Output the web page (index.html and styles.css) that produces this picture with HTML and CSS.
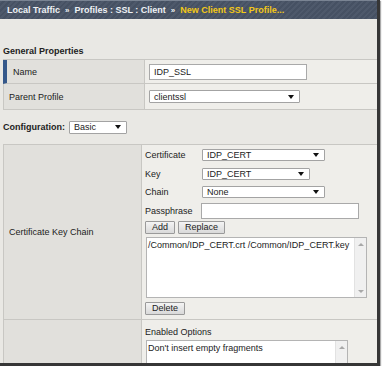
FILE: index.html
```html
<!DOCTYPE html>
<html lang="en">
<head>
    <meta charset="UTF-8">
    <title>New Client SSL Profile</title>
    <link rel="stylesheet" href="styles.css">
</head>
<body>
<div class="frame">
    <!-- breadcrumb bar -->
    <div class="crumbs">
        <span>Local Traffic</span>
        <span class="sep">&raquo;</span>
        <span>Profiles : SSL : Client</span>
        <span class="sep">&raquo;</span>
        <span class="current">New Client SSL Profile...</span>
    </div>

    <div class="section-title">General Properties</div>
    <div class="props props-general">
        <div class="label required">Name</div>
        <div class="value"><input class="text name-input" type="text" value="IDP_SSL"></div>
        <div class="label">Parent Profile</div>
        <div class="value">
            <div class="select parent-select"><span>clientssl</span><span class="caret"></span></div>
        </div>
    </div>

    <div class="config">
        <span class="config-label">Configuration:</span>
        <div class="select basic-select"><span>Basic</span><span class="caret"></span></div>
    </div>

    <div class="props props-config">
        <div class="label">Certificate Key Chain</div>
        <div class="value keychain">
            <div class="chain-form">
                <span>Certificate</span>
                <div class="select cert-select"><span>IDP_CERT</span><span class="caret"></span></div>
                <span>Key</span>
                <div class="select key-select"><span>IDP_CERT</span><span class="caret"></span></div>
                <span>Chain</span>
                <div class="select cert-select"><span>None</span><span class="caret"></span></div>
                <span>Passphrase</span>
                <input class="text pass-input" type="text" value="">
            </div>
            <div class="buttons">
                <button class="btn">Add</button>
                <button class="btn">Replace</button>
            </div>
            <div class="listbox chain-list">
                <div class="list-text">/Common/IDP_CERT.crt /Common/IDP_CERT.key</div>
                <div class="scroll-track"><span class="up"></span><span class="down"></span></div>
            </div>
            <div class="buttons">
                <button class="btn">Delete</button>
            </div>
        </div>
        <div class="label"></div>
        <div class="value options">
            <div class="options-title">Enabled Options</div>
            <div class="listbox options-list">
                <div class="list-text">Don't insert empty fragments</div>
                <div class="scroll-track"><span class="up"></span></div>
            </div>
        </div>
    </div>
</div>
</body>
</html>
```

FILE: styles.css
```css
body {
    margin: 0;
    background-color: #fff;
    font-family: "Liberation Sans", Arial, sans-serif;
    font-size: 9px;
    color: #222;
}

.frame {
    width: 377px;
    height: 363px;
    overflow: hidden;
    background-color: #e9e8e4;
    border-right: 3px solid #363636;
    border-bottom: 3px solid #363636;
    box-shadow: 1px 1px 1px #aaa;
}

/* breadcrumb bar */
.crumbs {
    height: 18px;
    border-top: 1px solid #7a8493;
    padding-left: 7px;
    display: flex;
    align-items: center;
    font-weight: bold;
    color: #eef1f5;
    background-color: #4a5567;
    background-image: repeating-linear-gradient(135deg, #4e596b 0 2px, #465163 2px 4px);
}

.crumbs .sep {
    margin: 0 5px;
    font-size: 8px;
}

.crumbs .current {
    color: #f3c817;
}

.section-title {
    font-weight: bold;
    line-height: 11px;
    padding: 27px 0 2px 3px;
}

/* property tables */
.props {
    display: grid;
    margin-left: 3px;
    border-top: 1px solid #c8c7c3;
}

.props-general {
    grid-template-columns: 142px 1fr;
}

.props-config {
    grid-template-columns: 139px 1fr;
}

.label {
    background-color: #e1e0dc;
    border-left: 1px solid #c8c7c3;
    border-right: 1px solid #c8c7c3;
    border-bottom: 1px solid #c8c7c3;
    padding-left: 5px;
    display: flex;
    align-items: center;
}

.label.required {
    border-left: 4px solid #35588a;
    padding-left: 6px;
}

.value {
    background-color: #efeeea;
    border-bottom: 1px solid #c8c7c3;
    padding-left: 4px;
    display: flex;
    align-items: center;
}

.props-general .label,
.props-general .value {
    height: 23px;
}

.props-general .label:nth-child(3),
.props-general .value:nth-child(4) {
    height: 25px;
}

/* controls */
.text {
    box-sizing: border-box;
    height: 16px;
    margin: 0;
    padding: 0 4px;
    border: 1px solid #a9a9a9;
    background: #fff;
    font: 9px "Liberation Sans", Arial, sans-serif;
    color: #222;
}

.name-input {
    width: 158px;
}

.pass-input {
    width: 158px;
}

.select {
    box-sizing: border-box;
    height: 13px;
    border: 1px solid #a3a3a3;
    border-radius: 1px;
    background: #fff;
    display: flex;
    align-items: center;
    justify-content: space-between;
    padding: 0 5px 0 4px;
}

.caret {
    width: 0;
    height: 0;
    border-left: 3px solid transparent;
    border-right: 3px solid transparent;
    border-top: 4px solid #111;
}

.parent-select {
    width: 151px;
}

.config {
    display: flex;
    align-items: center;
    height: 14px;
    padding-left: 3px;
    margin: 10px 0 10px;
}

.config-label {
    font-weight: bold;
    margin-right: 4px;
}

.basic-select {
    width: 58px;
}

/* certificate key chain */
.keychain {
    display: block;
    padding: 1px 0 4px 3px;
}

.chain-form {
    display: grid;
    grid-template-columns: 56px auto;
    grid-auto-rows: 18.5px;
    align-items: center;
    justify-items: start;
}

.cert-select {
    width: 123px;
    height: 12px;
    margin-left: 1px;
}

.key-select {
    width: 108px;
    height: 12px;
    margin-left: 1px;
}

.buttons {
    display: flex;
    gap: 3px;
    margin-top: 1px;
}

.btn {
    height: 13px;
    margin: 0;
    padding: 0 6px;
    border: 1px solid #9a9a9a;
    border-radius: 1px;
    background: linear-gradient(#f4f4f4, #d9d9d9);
    font: 9px "Liberation Sans", Arial, sans-serif;
    color: #222;
    line-height: 11px;
}

.listbox {
    box-sizing: border-box;
    display: flex;
    border: 1px solid #b4b4b4;
    background: #fff;
}

.list-text {
    flex: 1;
    padding: 2px 1px;
    line-height: 11px;
    white-space: nowrap;
}

.scroll-track {
    width: 11px;
    background: #f0f0f0;
    border-left: 1px solid #e2e2e2;
    display: flex;
    flex-direction: column;
    justify-content: space-between;
    align-items: center;
    padding: 5px 0 4px;
}

.scroll-track .up,
.scroll-track .down {
    width: 0;
    height: 0;
    border-left: 3px solid transparent;
    border-right: 3px solid transparent;
}

.scroll-track .up {
    border-bottom: 3px solid #a8a8a8;
}

.scroll-track .down {
    border-top: 3px solid #a8a8a8;
}

.chain-list {
    width: 221px;
    height: 61px;
    margin: 3px 0 4px 1px;
}

/* enabled options */
.options {
    display: block;
    padding: 6px 0 0 3px;
}

.options-title {
    line-height: 13px;
}

.options-list {
    width: 202px;
    height: 40px;
    margin: 1px 0 0 1px;
}
```
